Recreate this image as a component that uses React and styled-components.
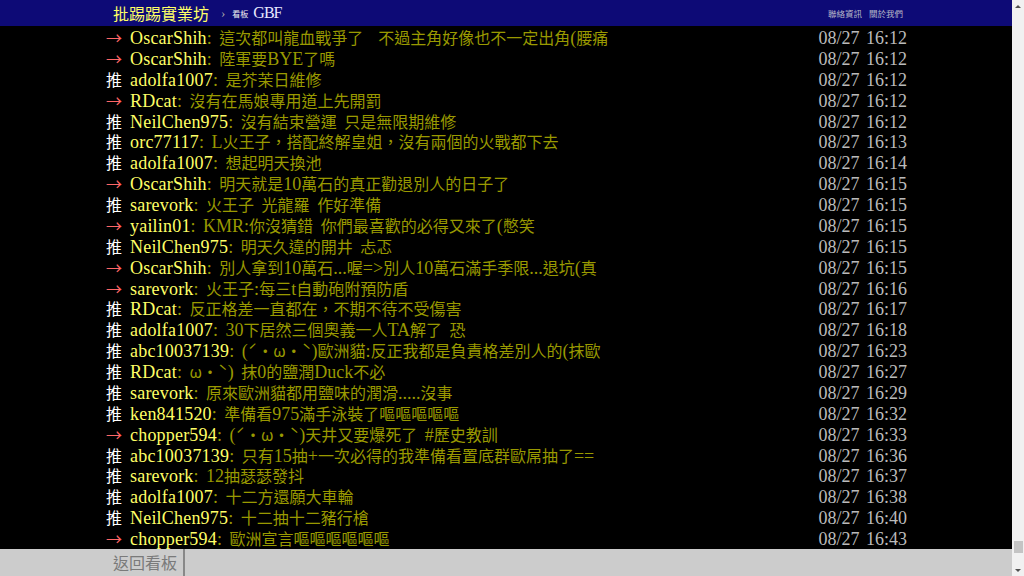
import React from "react";
import styled, { createGlobalStyle } from "styled-components";

const GlobalStyle = createGlobalStyle`
  html, body { margin: 0; padding: 0; background: #000; overflow: hidden; }
  #root { width: 1024px; height: 576px; }
`;

const Page = styled.div`
  display: flex;
  width: 1024px;
  height: 576px;
`;

const Main = styled.div`
  flex: 1;
  min-width: 0;
  display: flex;
  flex-direction: column;
  background: #000;
`;

const TopBar = styled.header`
  flex-shrink: 0;
  height: 26px;
  background: #0d0a76;
  display: flex;
  justify-content: center;
`;

const TopInner = styled.div`
  width: 800px;
  box-sizing: border-box;
  padding: 0 3px 0 7px;
  display: flex;
  align-items: center;
  white-space: nowrap;
`;

const Logo = styled.span`
  font-family: "Noto Sans CJK TC", sans-serif;
  font-size: 16px;
  line-height: 26px;
  color: #ff6;
`;

const Sep = styled.span`
  font-family: "Liberation Serif", serif;
  font-size: 13px;
  color: #aaa;
  margin: 0 7px 0 12px;
`;

const BoardLabel = styled.span`
  font-family: "Noto Sans CJK TC", sans-serif;
  font-size: 8px;
  color: #eee;
  margin-right: 5px;
`;

const BoardName = styled.span`
  font-family: "Liberation Serif", serif;
  font-size: 16px;
  color: #e8e8ff;
  letter-spacing: -1px;
`;

const Links = styled.div`
  margin-left: auto;
  display: flex;
  gap: 7px;
  font-family: "Noto Sans CJK TC", sans-serif;
  font-size: 8.5px;
  color: #b8b8c8;
`;

const Content = styled.main`
  flex: 1;
  min-height: 0;
  overflow: hidden;
  display: flex;
  justify-content: center;
  padding-top: 1px;
`;

const Pushes = styled.div`
  width: 800px;
  display: flex;
  flex-direction: column;
`;

const Row = styled.div`
  height: 20.88px;
  line-height: 20.88px;
  display: flex;
  align-items: baseline;
  white-space: pre;
`;

const Tag = styled.span`
  flex: 0 0 24px;
  font-family: "Noto Sans CJK TC", sans-serif;
  font-size: 16px;
  color: ${(p) => (p.$arrow ? "#f66" : "#fff")};
`;

const UserId = styled.span`
  flex-shrink: 0;
  font-family: "Liberation Serif", serif;
  font-size: 18px;
  color: #ff6;
  letter-spacing: 0.2px;
`;

const Text = styled.span`
  flex: 1;
  min-width: 0;
  color: #990;
`;

const Latin = styled.span`
  font-family: "Liberation Serif", serif;
  font-size: 18px;
  word-spacing: 3px;
`;

const Cjk = styled.span`
  font-family: "Noto Sans CJK TC", sans-serif;
  font-size: 16px;
`;

const DateTime = styled.span`
  flex-shrink: 0;
  font-family: "Liberation Serif", serif;
  font-size: 18px;
  color: #bbb;
  word-spacing: 2px;
  margin-right: -1px;
`;

const BottomBar = styled.footer`
  flex-shrink: 0;
  height: 27px;
  background: #ccc;
  display: flex;
  justify-content: center;
`;

const BottomInner = styled.div`
  width: 800px;
  display: flex;
`;

const BackLink = styled.span`
  padding: 0 6px 0 7px;
  border-right: 2px solid #888;
  font-family: "Noto Sans CJK TC", sans-serif;
  font-size: 16px;
  line-height: 27px;
  color: #7a7a7a;
`;

const ScrollBar = styled.div`
  flex: 0 0 12px;
  background: #f1f1f1;
  display: flex;
  flex-direction: column;
  align-items: stretch;
`;

const ArrowBox = styled.div`
  height: 12px;
  display: flex;
  align-items: center;
  justify-content: center;
`;

const Triangle = styled.div`
  width: 0;
  height: 0;
  border-left: 3px solid transparent;
  border-right: 3px solid transparent;
  ${(p) =>
    p.$down
      ? "border-top: 3px solid #505050;"
      : "border-bottom: 3px solid #505050;"}
`;

const Track = styled.div`
  flex: 1;
  display: flex;
  flex-direction: column;
  justify-content: flex-end;
  padding: 0 1px 11px 2px;
`;

const Thumb = styled.div`
  height: 12px;
  background: #c4c4c4;
`;

const pushes = [
  ["→", "OscarShih", "這次都叫龍血戰爭了  不過主角好像也不一定出角(腰痛", "08/27 16:12"],
  ["→", "OscarShih", "陸軍要BYE了嗎", "08/27 16:12"],
  ["推", "adolfa1007", "是芥茉日維修", "08/27 16:12"],
  ["→", "RDcat", "沒有在馬娘專用道上先開罰", "08/27 16:12"],
  ["推", "NeilChen975", "沒有結束營運 只是無限期維修", "08/27 16:12"],
  ["推", "orc77117", "L火王子，搭配終解皇姐，沒有兩個的火戰都下去", "08/27 16:13"],
  ["推", "adolfa1007", "想起明天換池", "08/27 16:14"],
  ["→", "OscarShih", "明天就是10萬石的真正勸退別人的日子了", "08/27 16:15"],
  ["推", "sarevork", "火王子 光龍羅 作好準備", "08/27 16:15"],
  ["→", "yailin01", "KMR:你沒猜錯 你們最喜歡的必得又來了(憋笑", "08/27 16:15"],
  ["推", "NeilChen975", "明天久違的開井 忐忑", "08/27 16:15"],
  ["→", "OscarShih", "別人拿到10萬石...喔=>別人10萬石滿手季限...退坑(真", "08/27 16:15"],
  ["→", "sarevork", "火王子:每三t自動砲附預防盾", "08/27 16:16"],
  ["推", "RDcat", "反正格差一直都在，不期不待不受傷害", "08/27 16:17"],
  ["推", "adolfa1007", "30下居然三個奧義一人TA解了 恐", "08/27 16:18"],
  ["推", "abc10037139", "(ˊ・ω・ˋ)歐洲貓:反正我都是負責格差別人的(抹歐", "08/27 16:23"],
  ["推", "RDcat", "ω・ˋ) 抹0的鹽潤Duck不必", "08/27 16:27"],
  ["推", "sarevork", "原來歐洲貓都用鹽味的潤滑.....沒事", "08/27 16:29"],
  ["推", "ken841520", "準備看975滿手泳裝了嘔嘔嘔嘔嘔", "08/27 16:32"],
  ["→", "chopper594", "(ˊ・ω・ˋ)天井又要爆死了 #歷史教訓", "08/27 16:33"],
  ["推", "abc10037139", "只有15抽+一次必得的我準備看置底群歐屌抽了==", "08/27 16:36"],
  ["推", "sarevork", "12抽瑟瑟發抖", "08/27 16:37"],
  ["推", "adolfa1007", "十二方還願大車輪", "08/27 16:38"],
  ["推", "NeilChen975", "十二抽十二豬行槍", "08/27 16:40"],
  ["→", "chopper594", "歐洲宣言嘔嘔嘔嘔嘔嘔", "08/27 16:43"],
];

function runs(text) {
  return text
    .split(/([\x00-\x7F]+)/)
    .filter(Boolean)
    .map((part, i) =>
      /^[\x00-\x7F]/.test(part) ? (
        <Latin key={i}>{part}</Latin>
      ) : (
        <Cjk key={i}>{part}</Cjk>
      )
    );
}

export default function App() {
  return (
    <Page>
      <GlobalStyle />
      <Main>
        <TopBar>
          <TopInner>
            <Logo>批踢踢實業坊</Logo>
            <Sep>›</Sep>
            <BoardLabel>看板</BoardLabel>
            <BoardName>GBF</BoardName>
            <Links>
              <span>聯絡資訊</span>
              <span>關於我們</span>
            </Links>
          </TopInner>
        </TopBar>
        <Content>
          <Pushes>
            {pushes.map(([tag, user, text, time], i) => (
              <Row key={i}>
                <Tag $arrow={tag === "→"}>{tag}</Tag>
                <UserId>{user}</UserId>
                <Text>{runs(": " + text)}</Text>
                <DateTime>{time}</DateTime>
              </Row>
            ))}
          </Pushes>
        </Content>
        <BottomBar>
          <BottomInner>
            <BackLink>返回看板</BackLink>
          </BottomInner>
        </BottomBar>
      </Main>
      <ScrollBar>
        <ArrowBox>
          <Triangle />
        </ArrowBox>
        <Track>
          <Thumb />
        </Track>
        <ArrowBox>
          <Triangle $down />
        </ArrowBox>
      </ScrollBar>
    </Page>
  );
}
